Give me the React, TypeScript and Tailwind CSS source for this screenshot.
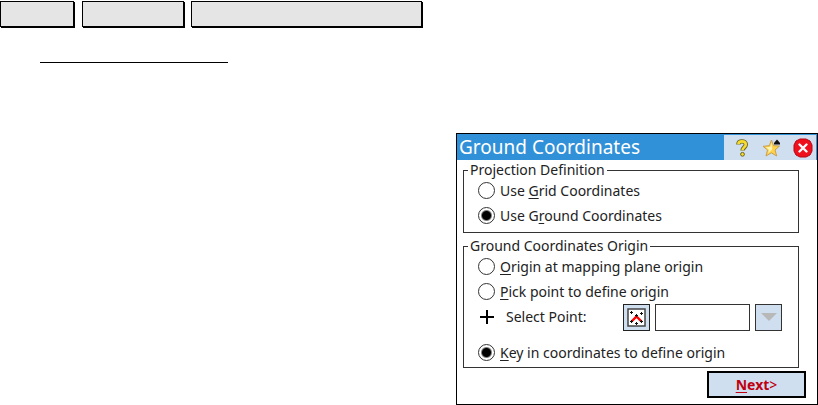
import type { ReactNode } from "react";

type OriginOption = {
  id: string;
  group: string;
  checked?: boolean;
  children: ReactNode;
};

function RadioRow({ id, group, checked, children }: OriginOption) {
  return (
    <div className="flex h-[25px] items-center gap-[5px] pl-3.5">
      <input
        id={id}
        type="radio"
        name={group}
        defaultChecked={checked}
        className="size-[17px] shrink-0 appearance-none rounded-full border border-[#333] bg-white checked:bg-[radial-gradient(circle,#000_4px,#fff_6px)]"
      />
      <label htmlFor={id} className="whitespace-nowrap">
        {children}
      </label>
    </div>
  );
}

function Key({ children }: { children: string }) {
  return <span className="underline underline-offset-2">{children}</span>;
}

function HelpIcon() {
  return (
    <svg viewBox="0 0 16 20" className="h-5 w-4" fill="none" strokeLinejoin="round">
      <path d="M4.4 6.6C4.4 4.400 5.800 3.400 8 3.400s3.800 1.200 3.800 3.200c0 2.600-3.300 3-3.300 6" stroke="#6b6224" strokeWidth="4.400" />
      <path d="M4.400 6.200C4.400 4.400 5.800 3.400 8 3.400s3.800 1.200 3.800 3.200c0 2.600-3.300 3-3.300 5.600" stroke="#f5dc2e" strokeWidth="2.600" />
      <circle cx="8.500" cy="16.300" r="1.900" fill="#f5dc2e" stroke="#6b6224" />
    </svg>
  );
}

function StarIcon() {
  return (
    <svg viewBox="0 0 20 20" className="size-5">
      <path d="M9.500 2l2 5.700 6 .3-4.500 4 1.700 6-5.400-3.200L4 18l1.500-6L1 8.300l6.300-.6z" fill="#ffd24a" stroke="#c9a050" strokeLinejoin="round" />
      <path d="M9.300 4.500L8.300 9l-4.500.2 3.200 2.500-.7 3.500 4-4z" fill="#fff7b8" />
      <path d="M12 6.500V5l3-3.500L18 5v1.500z" fill="#111" />
    </svg>
  );
}

function CloseIcon() {
  return (
    <svg viewBox="0 0 20 20" className="size-5">
      <path d="M7 1h6l4 2 2 4v6l-2 4-4 2H7l-4-2-2-4V7l2-4z" fill="#f0101c" stroke="#b30a17" strokeLinejoin="round" />
      <path d="M6.500 6.500l7 7m0-7l-7 7" stroke="#fff" strokeWidth="2.400" strokeLinecap="round" />
    </svg>
  );
}

function MapIcon() {
  return (
    <svg viewBox="0 0 19 19" className="size-[19px]">
      <rect x="1" y="1" width="17" height="17" fill="#fff" stroke="#444" strokeWidth="1.500" />
      <path d="M4.500 13.500l5-5 5 5" fill="none" stroke="#f00" strokeWidth="2.400" />
      <path
        d="M3 4.500h3M4.500 3v3M13 5.500h3M14.500 4v3M8 7.500h3M9.500 6v3M3 13.500h3M4.500 12v3M13 13.500h3M14.500 12v3M8 15.500h3M9.500 14v3"
        stroke="#111"
      />
    </svg>
  );
}

export default function App() {
  return (
    <main className="flex min-h-screen flex-col justify-between bg-white pt-px font-['Noto_Sans',sans-serif] text-[14px] leading-4 text-[#222]">
      <header>
        <div className="flex gap-2">
          <div className="h-[26px] w-[74px] border border-black bg-[#e5e5e5] shadow-[1px_1px_0_#000]" />
          <div className="h-[26px] w-[102px] border border-black bg-[#e5e5e5] shadow-[1px_1px_0_#000]" />
          <div className="-ml-px h-[26px] w-[231px] border border-black bg-[#e5e5e5] shadow-[1px_1px_0_#000]" />
        </div>
        <hr className="mt-[35px] ml-10 w-[188px] border-black" />
      </header>

      <section className="w-[362px] self-end border border-black bg-white" aria-labelledby="dialog-title">
        <div className="flex h-[26px] justify-between bg-[#3191d8]">
          <h1 id="dialog-title" className="pl-0.5 text-[19px] leading-[26px] text-white">
            Ground Coordinates
          </h1>
          <div className="flex w-[93px] items-center justify-between border-t border-r border-[#3191d8] bg-[#cfdff0] pr-[3px] pl-2.5">
            <button type="button" aria-label="Help">
              <HelpIcon />
            </button>
            <button type="button" aria-label="Favorites">
              <StarIcon />
            </button>
            <button type="button" aria-label="Close">
              <CloseIcon />
            </button>
          </div>
        </div>

        <form className="flex flex-col pt-0.5 pr-[18px] pl-1.5">
          <fieldset className="border border-[#333] pb-1">
            <legend className="ml-1 h-4 px-0.5">Projection Definition</legend>
            <RadioRow id="use-grid" group="projection">
              Use <Key>G</Key>rid Coordinates
            </RadioRow>
            <RadioRow id="use-ground" group="projection" checked>
              Use G<Key>r</Key>ound Coordinates
            </RadioRow>
          </fieldset>

          <fieldset className="mt-[5px] border border-[#333] pb-0.5">
            <legend className="ml-1 h-4 px-0.5">Ground Coordinates Origin</legend>
            <RadioRow id="mapping-plane" group="origin">
              <Key>O</Key>rigin at mapping plane origin
            </RadioRow>
            <RadioRow id="pick-point" group="origin">
              <Key>P</Key>ick point to define origin
            </RadioRow>
            <div className="mb-2.5 flex h-[26px] items-center justify-between pr-4 pl-4">
              <div className="flex items-center gap-3">
                <svg viewBox="0 0 14 14" className="size-3.5">
                  <path d="M0 7h14M7 0v14" stroke="#000" strokeWidth="2" />
                </svg>
                <label htmlFor="point">Select Point:</label>
              </div>
              <div className="flex gap-[5px]">
                <button type="button" aria-label="Pick from map" className="flex size-[27px] items-center justify-center border border-[#222] bg-[#cfdff0]">
                  <MapIcon />
                </button>
                <input id="point" type="text" className="h-[27px] w-[95px] border border-[#333] bg-white px-1" />
                <button type="button" aria-label="Point list" disabled className="flex size-[27px] items-center justify-center border border-[#333] bg-[#cfdff0]">
                  <svg viewBox="0 0 16 8" className="h-2 w-4">
                    <path d="M0 0h16L8 8z" fill="#b8b8b8" />
                  </svg>
                </button>
              </div>
            </div>
            <RadioRow id="key-in" group="origin" checked>
              <Key>K</Key>ey in coordinates to define origin
            </RadioRow>
          </fieldset>
        </form>

        <div className="flex justify-end pt-[3px] pr-[11px] pb-1.5">
          <button type="button" className="h-[27px] w-[99px] border-2 border-black bg-[#cfdff0] font-bold text-[#c00010]">
            <Key>N</Key>ext<span className="font-medium">&gt;</span>
          </button>
        </div>
      </section>
    </main>
  );
}
